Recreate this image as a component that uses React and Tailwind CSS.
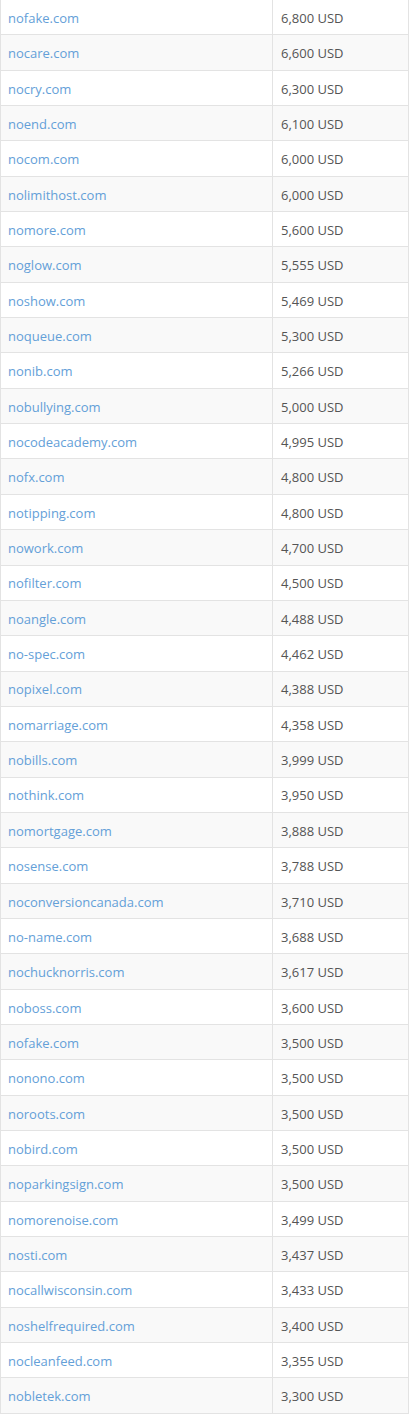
const DOMAINS = [
  ["nofake.com", "6,800"],
  ["nocare.com", "6,600"],
  ["nocry.com", "6,300"],
  ["noend.com", "6,100"],
  ["nocom.com", "6,000"],
  ["nolimithost.com", "6,000"],
  ["nomore.com", "5,600"],
  ["noglow.com", "5,555"],
  ["noshow.com", "5,469"],
  ["noqueue.com", "5,300"],
  ["nonib.com", "5,266"],
  ["nobullying.com", "5,000"],
  ["nocodeacademy.com", "4,995"],
  ["nofx.com", "4,800"],
  ["notipping.com", "4,800"],
  ["nowork.com", "4,700"],
  ["nofilter.com", "4,500"],
  ["noangle.com", "4,488"],
  ["no-spec.com", "4,462"],
  ["nopixel.com", "4,388"],
  ["nomarriage.com", "4,358"],
  ["nobills.com", "3,999"],
  ["nothink.com", "3,950"],
  ["nomortgage.com", "3,888"],
  ["nosense.com", "3,788"],
  ["noconversioncanada.com", "3,710"],
  ["no-name.com", "3,688"],
  ["nochucknorris.com", "3,617"],
  ["noboss.com", "3,600"],
  ["nofake.com", "3,500"],
  ["nonono.com", "3,500"],
  ["noroots.com", "3,500"],
  ["nobird.com", "3,500"],
  ["noparkingsign.com", "3,500"],
  ["nomorenoise.com", "3,499"],
  ["nosti.com", "3,437"],
  ["nocallwisconsin.com", "3,433"],
  ["noshelfrequired.com", "3,400"],
  ["nocleanfeed.com", "3,355"],
  ["nobletek.com", "3,300"],
];

export default function App() {
  return (
    <div className="w-[409px] bg-white font-['Open_Sans',sans-serif] text-[13px]">
      <div className="border-x border-[#e3e3e3]">
        {DOMAINS.map(([name, price], i) => (
          <div
            key={i}
            className={`grid grid-cols-[272px_1fr] h-[35.35px] border-b border-[#e3e3e3] ${
              i % 2 === 1 ? "bg-[#f9f9f9]" : "bg-white"
            }`}
          >
            {/* domain */}
            <div className="flex items-center pl-[7px] pt-[3px] border-r border-[#e3e3e3]">
              <a href="#" className="text-[#64a0d8] no-underline">
                {name}
              </a>
            </div>
            {/* price */}
            <div className="flex items-center pl-[8px] pt-[3px] text-[#555]">
              {price} USD
            </div>
          </div>
        ))}
      </div>
    </div>
  );
}
